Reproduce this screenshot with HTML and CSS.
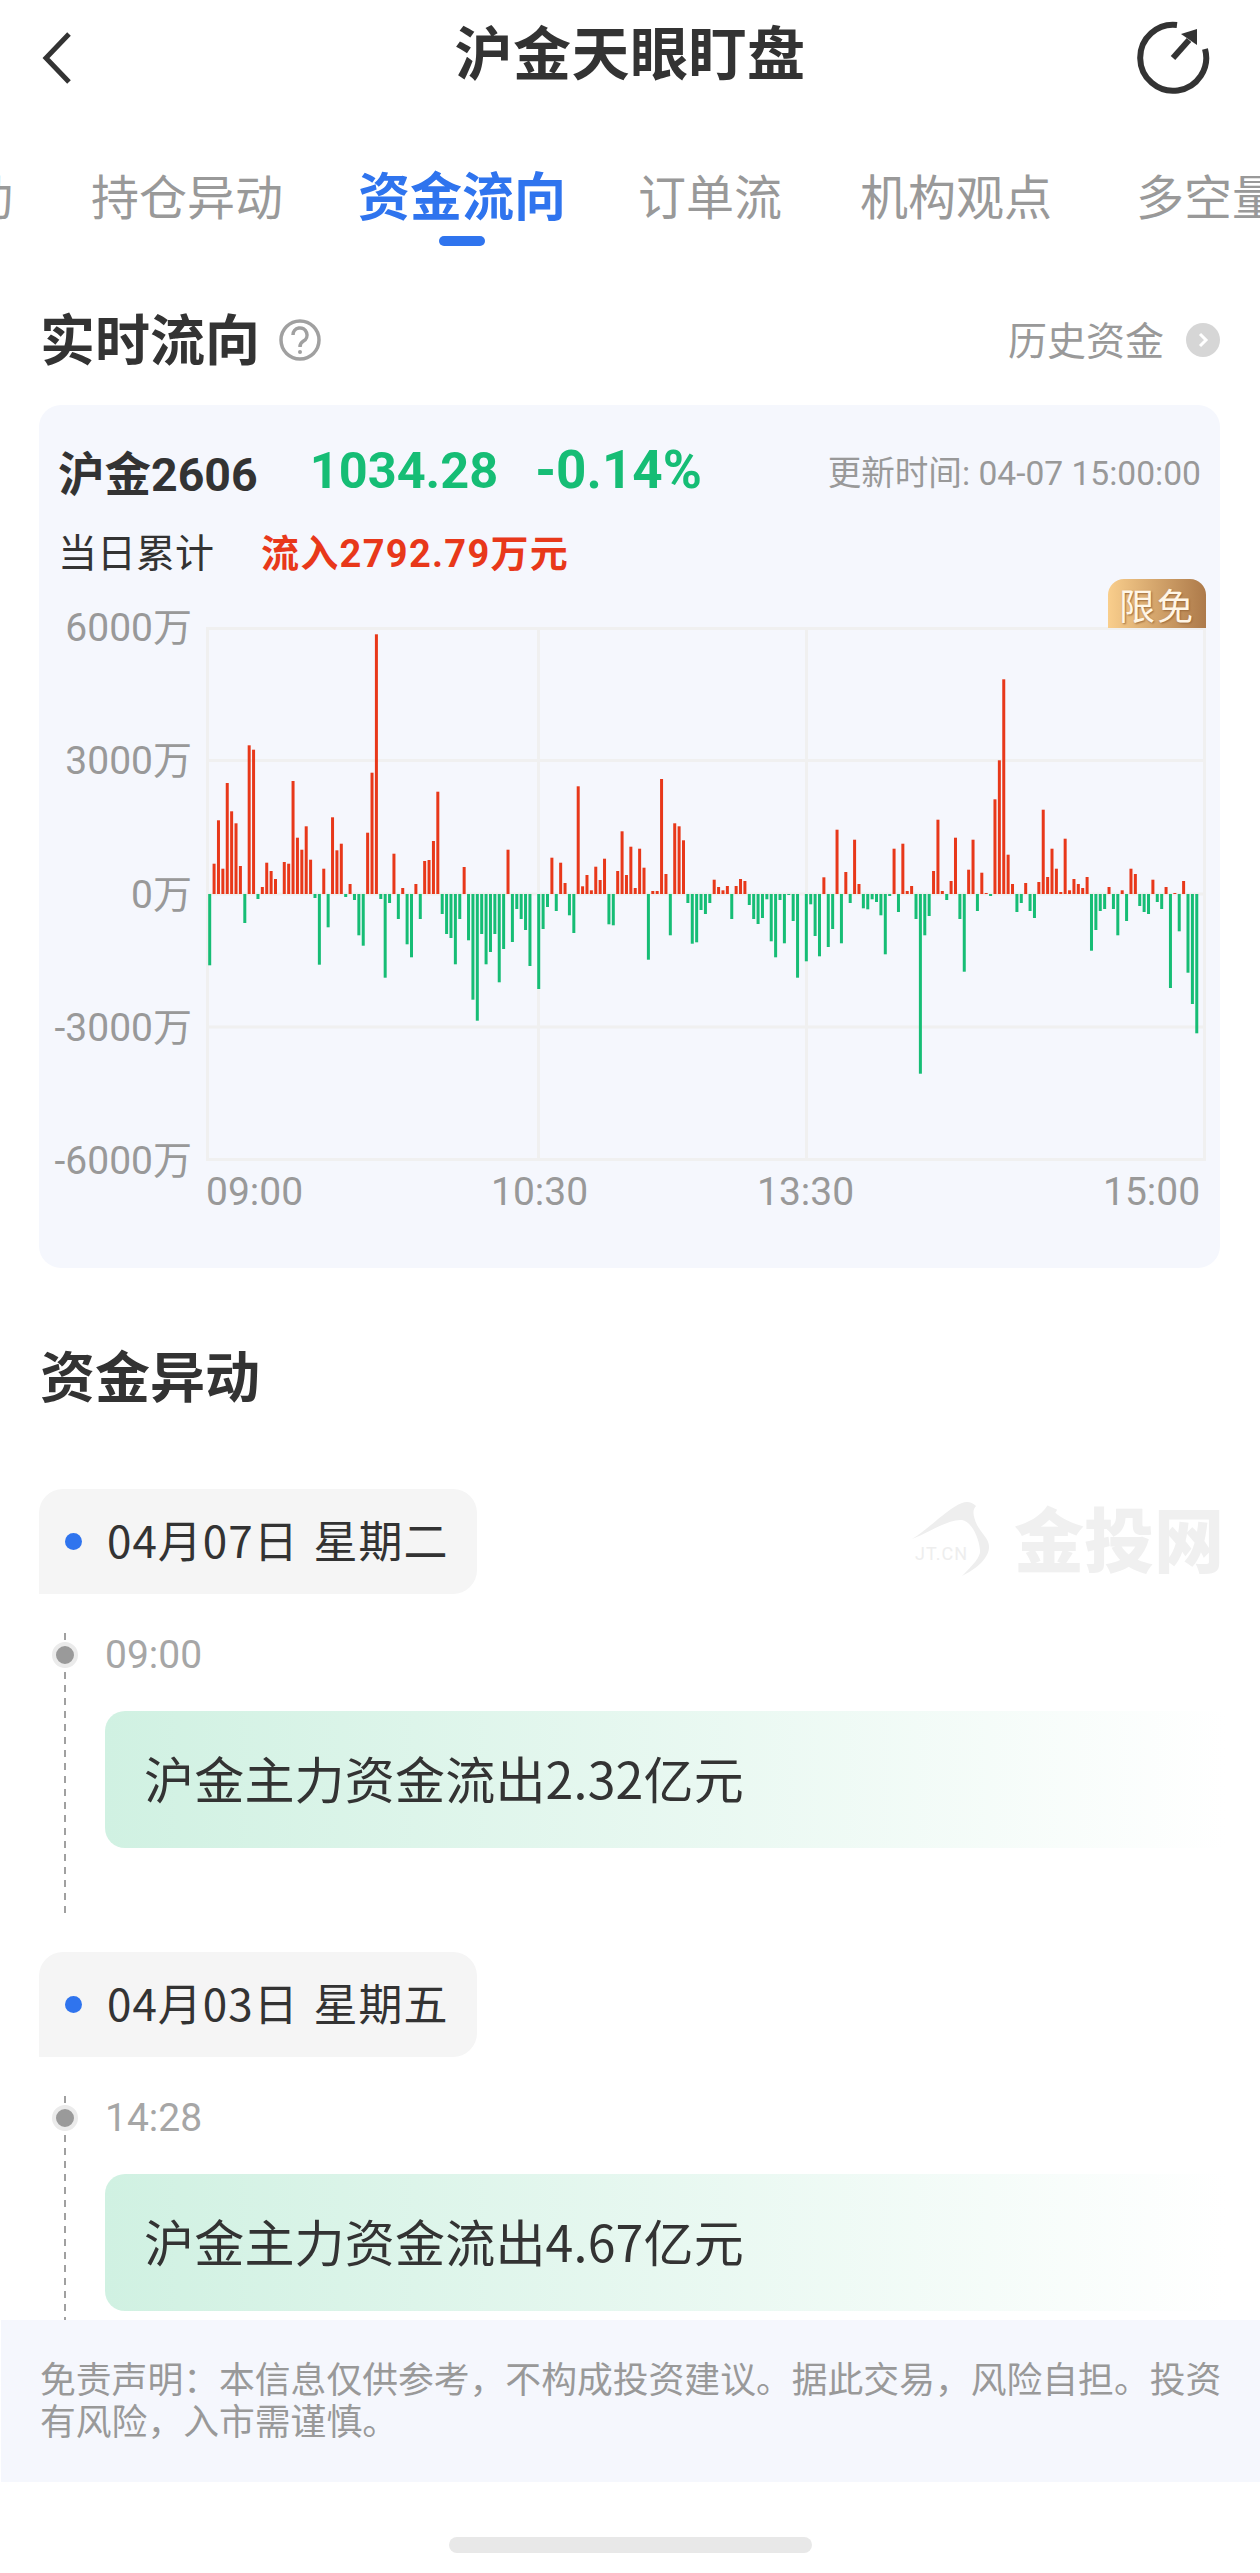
FILE: index.html
```html
<!DOCTYPE html>
<html lang="zh-CN">
<head>
  <meta charset="UTF-8">
  <meta name="viewport" content="width=device-width, initial-scale=1.0">
  <link rel="stylesheet" href="styles.css">
  <title>沪金天眼盯盘</title>
</head>
<body>

<div class="page">
  <header class="topbar">
    <svg class="back-icon" viewBox="0 0 30 52"><path d="M27 2 L4 26 L27 50" /></svg>
    <div class="title">沪金天眼盯盘</div>
    <svg class="timer-icon" viewBox="0 0 76 76">
      <path d="M42 5 A33 33 0 1 0 70 29" />
      <path d="M38 38 L54 20" />
      <path class="timer-head" d="M46 14 L62 9 L62 25 Z" />
    </svg>
  </header>

  <nav class="tabs">
    <div class="tab">主力异动</div>
    <div class="tab">持仓异动</div>
    <div class="tab tab-active">资金流向</div>
    <div class="tab">订单流</div>
    <div class="tab">机构观点</div>
    <div class="tab">多空量比</div>
  </nav>

  <section class="section-head">
    <div class="section-title">实时流向</div>
    <svg class="help-icon" viewBox="0 0 42 42">
      <circle cx="21" cy="21" r="19" />
      <path d="M14 16 A7 7 0 1 1 24.5 22 Q21 24 21 28" />
      <circle class="help-dot" cx="21" cy="33" r="2" />
    </svg>
    <div class="history">历史资金</div>
    <svg class="go-icon" viewBox="0 0 34 34">
      <circle cx="17" cy="17" r="17" />
      <path d="M14 11 L20 17 L14 23" />
    </svg>
  </section>

  <section class="card">
    <div class="quote">
      <span class="quote-name">沪金2606</span>
      <span class="quote-price">1034.28</span>
      <span class="quote-pct">-0.14%</span>
      <span class="quote-time">更新时间: 04-07 15:00:00</span>
    </div>
    <div class="total">
      <span class="total-label">当日累计</span>
      <span class="total-value">流入2792.79万元</span>
    </div>
    <div class="chart">
      <div class="y-labels">
        <span>6000万</span>
        <span>3000万</span>
        <span>0万</span>
        <span>-3000万</span>
        <span>-6000万</span>
      </div>
      <div class="plot" id="plot">
        <div class="free-badge">限免</div>
      </div>
    </div>
    <div class="x-labels">
      <span>09:00</span>
      <span>10:30</span>
      <span>13:30</span>
      <span>15:00</span>
    </div>
  </section>

  <div class="section-title alert-title">资金异动</div>

  <main class="feed">
    <div class="watermark">
      <svg class="watermark-logo" viewBox="0 0 80 76">
        <path d="M0 37 C18 26 36 6 50 1 C55 -1 60 0 64 4 C60 8 61 14 65 23 C70 32 78 38 77 46 C76 58 62 68 50 74 C62 62 69 54 68 48 C67 36 60 20 50 18 C36 17 18 30 0 37 Z" />
        <text x="3" y="58">JT.CN</text>
      </svg>
      <span>金投网</span>
    </div>

    <div class="day">
      <div class="date-pill"><i class="date-dot"></i>04月07日 星期二</div>
      <div class="event">
        <div class="event-time"><i class="time-dot"></i>09:00</div>
        <div class="event-card">沪金主力资金流出2.32亿元</div>
      </div>
    </div>

    <div class="day">
      <div class="date-pill"><i class="date-dot"></i>04月03日 星期五</div>
      <div class="event">
        <div class="event-time"><i class="time-dot"></i>14:28</div>
        <div class="event-card">沪金主力资金流出4.67亿元</div>
      </div>
    </div>
  </main>

  <footer class="disclaimer">免责声明：本信息仅供参考，不构成投资建议。据此交易，风险自担。投资有风险，入市需谨慎。</footer>

  <div class="home-bar"><div class="home-pill"></div></div>
</div>

<script src="chart.js"></script>
</body>
</html>
```

FILE: styles.css
```css
* {
  box-sizing: border-box;
}

body {
  margin: 0;
  background: #ffffff;
  font-family: Roboto, "Noto Sans CJK SC", sans-serif;
  color: #333333;
}

.page {
  width: 1260px;
  height: 2573px;
  display: flex;
  flex-direction: column;
  overflow: hidden;
}

/* Top bar */
.topbar {
  height: 108px;
  flex: none;
  display: grid;
  grid-template-columns: 1fr auto 1fr;
  align-items: center;
  padding: 8px 49px 0 49px;
}

.back-icon {
  width: 30px;
  height: 52px;
  margin-left: -7px;
  fill: none;
  stroke: #333333;
  stroke-width: 5;
}

.title {
  font-family: "Noto Sans CJK SC", sans-serif;
  font-size: 58px;
  font-weight: 700;
  line-height: 64px;
  letter-spacing: 0.5px;
  margin-top: -16px;
}

.timer-icon {
  width: 76px;
  height: 76px;
  justify-self: end;
  fill: none;
  stroke: #333333;
  stroke-width: 6;
}

.timer-head {
  fill: #333333;
  stroke: none;
}

/* Tabs */
.tabs {
  height: 143px;
  flex: none;
  display: flex;
  gap: 78px;
  margin-left: -179px;
  padding-top: 57px;
  white-space: nowrap;
}

.tab {
  position: relative;
  height: 58px;
  font-family: "Noto Sans CJK SC", sans-serif;
  font-size: 48px;
  line-height: 58px;
  color: #999999;
}

.tab:last-child {
  margin-left: 6px;
}

.tab-active {
  margin: 0 -6px 0 -3px;
  font-size: 52px;
  font-weight: 700;
  color: #2f74ee;
}

.tab-active::after {
  content: "";
  position: absolute;
  left: 81px;
  top: 71px;
  width: 46px;
  height: 10px;
  border-radius: 5px;
  background: #2f74ee;
}

/* Section heading */
.section-head {
  height: 154px;
  flex: none;
  display: flex;
  align-items: flex-start;
  padding: 53px 40px 0 40px;
}

.section-title {
  font-family: "Noto Sans CJK SC", sans-serif;
  font-size: 55px;
  font-weight: 700;
  line-height: 64px;
}

.help-icon {
  width: 42px;
  height: 42px;
  margin: 15px 0 0 19px;
  fill: none;
  stroke: #a0a0a0;
  stroke-width: 3.5;
}

.help-dot {
  fill: #a0a0a0;
  stroke: none;
}

.history {
  margin-left: auto;
  font-family: "Noto Sans CJK SC", sans-serif;
  font-size: 39px;
  line-height: 50px;
  margin-top: 9px;
  color: #999999;
}

.go-icon {
  width: 34px;
  height: 34px;
  margin: 19px 0 0 22px;
  fill: #d6d6d6;
}

.go-icon path {
  fill: none;
  stroke: #ffffff;
  stroke-width: 3;
}

/* Chart card */
.card {
  height: 863px;
  flex: none;
  margin: 0 40px 0 39px;
  padding: 40px 15px 0 19px;
  border-radius: 22px;
  background: #f5f7fd;
}

.quote {
  height: 50px;
  display: flex;
  align-items: center;
  white-space: nowrap;
}

.quote-name {
  font-size: 46.5px;
  font-weight: 700;
  margin-right: 52px;
}

.quote-price {
  font-size: 50.5px;
  font-weight: 700;
  color: #16bd75;
}

.quote-pct {
  margin-left: 37px;
  font-size: 53px;
  font-weight: 700;
  color: #16bd75;
}

.quote-time {
  margin-left: auto;
  margin-right: 4px;
  font-size: 33.6px;
  color: #999999;
}

.total {
  height: 50px;
  margin-top: 30px;
  display: flex;
  align-items: center;
  gap: 47px;
  font-size: 39px;
  white-space: nowrap;
}

.total-value {
  font-size: 38px;
  font-weight: 700;
  letter-spacing: 1.3px;
  color: #e8381a;
}

.chart {
  height: 533px;
  margin-top: 52px;
  display: flex;
}

.y-labels {
  width: 134px;
  flex: none;
  margin: -21px 0 -23px;
  display: flex;
  flex-direction: column;
  justify-content: space-between;
  align-items: flex-end;
  font-size: 39px;
  line-height: 44px;
  color: #999999;
  white-space: nowrap;
}

.plot {
  position: relative;
  width: 1000px;
  margin-left: 14px;
}

.plot svg {
  display: block;
}

.free-badge {
  position: absolute;
  right: 0;
  top: -48px;
  width: 98px;
  height: 49px;
  border-radius: 16px 16px 0 0;
  background: linear-gradient(90deg, #f9ce8c, #ad7a4a);
  color: #fff6e6;
  font-family: "Noto Sans CJK SC", sans-serif;
  font-size: 36px;
  line-height: 50px;
  text-align: center;
  letter-spacing: 2px;
  text-shadow: 1px 1px 2px #9c6a3a;
}

.x-labels {
  margin: 10px 0 0 148px;
  height: 44px;
  display: grid;
  grid-template-columns: 285px 266px 346px auto;
  font-size: 39px;
  line-height: 44px;
  color: #999999;
}

/* Alerts */
.alert-title {
  flex: none;
  margin: 73px 0 0 40px;
}

.feed {
  position: relative;
  flex: 1;
  min-height: 0;
  overflow: hidden;
  padding: 84px 0 0 39px;
}

.watermark {
  position: absolute;
  top: 91px;
  right: 36px;
  display: flex;
  align-items: center;
  gap: 22px;
  color: #f0f0f0;
  font-family: "Noto Sans CJK SC", sans-serif;
  font-size: 70px;
  font-weight: 900;
  line-height: 80px;
}

.watermark-logo {
  width: 80px;
  height: 76px;
  margin-top: 6px;
  fill: #eeeeee;
}

.watermark-logo text {
  font-family: Roboto, sans-serif;
  font-size: 18px;
  font-weight: 400;
  letter-spacing: 1px;
}

.day {
  height: 463px;
}

.date-pill {
  width: 438px;
  height: 105px;
  display: flex;
  align-items: center;
  padding: 0 0 6px 26px;
  border-radius: 24px 24px 24px 0;
  background: #f5f5f5;
  font-family: "Noto Sans CJK SC", Roboto, sans-serif;
  font-size: 44px;
  letter-spacing: 1px;
  word-spacing: 4px;
  white-space: pre;
}

.date-dot {
  width: 17px;
  height: 17px;
  margin: 6px 25px 0 0;
  border-radius: 50%;
  background: #2f74ee;
}

.event {
  height: 280px;
  margin: 39px 0 0 25px;
  padding-left: 41px;
  background: repeating-linear-gradient(#a0a0a0 0 7px, transparent 7px 13px) left top / 2px 100% no-repeat;
}

.event-time {
  position: relative;
  height: 44px;
  margin-bottom: 34px;
  font-size: 39px;
  line-height: 44px;
  color: #a6a6a6;
}

.time-dot {
  position: absolute;
  left: -53px;
  top: 9px;
  width: 26px;
  height: 26px;
  border: 4px solid #ebebeb;
  border-radius: 50%;
  background: #9a9a9a;
}

.event-card {
  height: 137px;
  padding: 0 0 5px 39px;
  display: flex;
  align-items: center;
  border-radius: 20px 0 0 20px;
  background: linear-gradient(90deg, #d0f1e2, #ffffff 97%);
  font-family: "Noto Sans CJK SC", Roboto, sans-serif;
  font-size: 50px;
  letter-spacing: 0.2px;
}

.disclaimer {
  height: 162px;
  flex: none;
  margin-left: 1px;
  padding: 36px 30px 0 39px;
  background: #f5f7fd;
  font-family: "Noto Sans CJK SC", sans-serif;
  font-size: 35.8px;
  line-height: 42px;
  color: #999999;
}

.home-bar {
  height: 91px;
  flex: none;
  padding-top: 55px;
}

.home-pill {
  width: 363px;
  height: 16px;
  margin: 0 auto;
  border-radius: 8px;
  background: #e8e8e8;
}
```

FILE: chart.js
```js
// one value per bucket, in thirds of a chart pixel above (+) or below (-) the zero line
const flows = [
  -214, 91, 221, 76, 333, 248, 212, 84, -87, 446, 433, -15, 21, 94, 69, 45, 0, 96, 91, 339,
  169, 133, 203, 103, -12, -212, 76, -100, 230, 131, 151, -9, 30, -18, -124, -155, 184, 364, 779, -15,
  -251, -27, 121, -75, 18, -151, -190, 30, -75, 99, 102, 159, 307, -60, -120, -132, -211, -75, 81, -139,
  -317, -380, -120, -211, -174, -120, -265, -165, 133, -144, -45, -75, -108, -216, 0, -285, -105, -39, 109, -51,
  94, 33, -64, -117, 323, 23, 57, 11, 82, 42, 106, -91, -94, 69, 188, 57, 142, 18, 136, 79,
  -197, 9, 9, 345, 60, -124, 212, 203, 161, -27, -149, -145, -48, -60, -27, 43, 21, 11, 24, -75,
  24, 45, 39, -33, -75, -90, -72, -16, -142, -190, -18, -148, -3, -81, -251, 0, -202, -31, -126, -187,
  50, -159, -105, 193, -148, 66, -27, 163, 30, -43, -46, -16, -24, -64, -181, -6, 136, -54, 151, 9,
  24, -75, -539, -124, -66, 69, 223, 9, -18, 39, 169, -75, -233, 73, 163, -51, 64, 3, -6, 284,
  401, 644, 118, 30, -54, -27, 33, -51, -72, 36, 253, 51, 136, 76, 6, 166, 11, 45, 30, 18,
  51, -170, -108, -51, -45, 21, -45, -124, 11, -81, 76, 60, -36, -54, -60, 43, -24, -45, 21, -282,
  3, -112, 39, -236, -330, -418
];

const W = 1000;
const H = 534;
const ZERO = 267;
const STEP = 4.387;
const RED = '#e8381a';
const GREEN = '#16bd75';
const GRID = '#f0f0f0';

let svg = '';

// grid
[1.5, 133.5, 267, 400, 532.5].forEach(y => {
  svg += `<rect x="0" y="${y - 1.5}" width="${W}" height="3" fill="${GRID}"/>`;
});
[1.5, 332.5, 600.5, 998.5].forEach(x => {
  svg += `<rect x="${x - 1.5}" y="0" width="3" height="${H}" fill="${GRID}"/>`;
});

// bars
flows.forEach((v, i) => {
  const h = Math.abs(v) / 3;
  const x = 2.2 + i * STEP;
  const y = v > 0 ? ZERO - h : ZERO;
  svg += `<rect x="${x.toFixed(2)}" y="${y.toFixed(1)}" width="3" height="${h.toFixed(1)}" fill="${v > 0 ? RED : GREEN}"/>`;
});

document.getElementById('plot').insertAdjacentHTML(
  'afterbegin',
  `<svg width="${W}" height="${H}" viewBox="0 0 ${W} ${H}">${svg}</svg>`
);
```
